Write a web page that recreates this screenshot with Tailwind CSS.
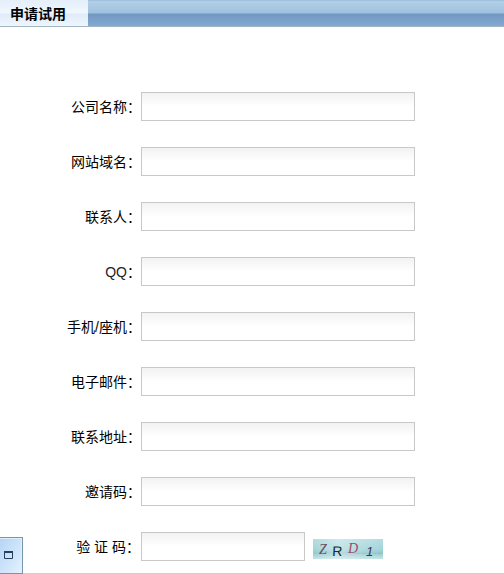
<!DOCTYPE html>
<html lang="zh-CN">
<head>
    <meta charset="UTF-8">
    <meta name="viewport" content="width=device-width, initial-scale=1.0">
    <title>申请试用</title>
    <script src="https://cdn.jsdelivr.net/npm/@tailwindcss/browser@4"></script>
</head>
<body class="relative h-[574px] overflow-hidden bg-white font-['Liberation_Sans','Noto_Sans_CJK_SC',sans-serif] text-sm text-black">

    <!-- title bar -->
    <div class="flex h-[27px] border-b border-[#a3b5c1] bg-[linear-gradient(#8fb4d4_0px,#b3cfe8_1px,#9fc1df_13px,#7298c1_14px,#82a9d2_26px)]">
        <h2 class="flex w-[88px] items-center bg-[linear-gradient(#e4effa_0px,#f0f7fe_13px,#dfebf8_14px,#edf6fd_26px)] pl-[10px] pt-px text-sm font-bold">申请试用</h2>
    </div>

    <form id="form" class="flex flex-col gap-[26px] pt-[65px]">
        <div class="flex h-[29px] items-center">
            <label for="company" class="w-[141px] text-right">公司名称：</label>
            <input type="text" id="company" name="company" autocomplete="off" class="h-[29px] w-[274px] border border-[#c8c8c8] bg-linear-to-b from-[#f2f2f2] to-white to-50% px-2 outline-none">
        </div>
        <div class="flex h-[29px] items-center">
            <label for="domain" class="w-[141px] text-right">网站域名：</label>
            <input type="text" id="domain" name="domain" autocomplete="off" class="h-[29px] w-[274px] border border-[#c8c8c8] bg-linear-to-b from-[#f2f2f2] to-white to-50% px-2 outline-none">
        </div>
        <div class="flex h-[29px] items-center">
            <label for="contact" class="w-[141px] text-right">联系人：</label>
            <input type="text" id="contact" name="contact" autocomplete="off" class="h-[29px] w-[274px] border border-[#c8c8c8] bg-linear-to-b from-[#f2f2f2] to-white to-50% px-2 outline-none">
        </div>
        <div class="flex h-[29px] items-center">
            <label for="qq" class="w-[141px] text-right"><span class="text-[#222]">QQ</span>：</label>
            <input type="text" id="qq" name="qq" autocomplete="off" class="h-[29px] w-[274px] border border-[#c8c8c8] bg-linear-to-b from-[#f2f2f2] to-white to-50% px-2 outline-none">
        </div>
        <div class="flex h-[29px] items-center">
            <label for="phone" class="w-[141px] text-right">手机/座机：</label>
            <input type="text" id="phone" name="phone" autocomplete="off" class="h-[29px] w-[274px] border border-[#c8c8c8] bg-linear-to-b from-[#f2f2f2] to-white to-50% px-2 outline-none">
        </div>
        <div class="flex h-[29px] items-center">
            <label for="email" class="w-[141px] text-right">电子邮件：</label>
            <input type="text" id="email" name="email" autocomplete="off" class="h-[29px] w-[274px] border border-[#c8c8c8] bg-linear-to-b from-[#f2f2f2] to-white to-50% px-2 outline-none">
        </div>
        <div class="flex h-[29px] items-center">
            <label for="address" class="w-[141px] text-right">联系地址：</label>
            <input type="text" id="address" name="address" autocomplete="off" class="h-[29px] w-[274px] border border-[#c8c8c8] bg-linear-to-b from-[#f2f2f2] to-white to-50% px-2 outline-none">
        </div>
        <div class="flex h-[29px] items-center">
            <label for="invite" class="w-[141px] text-right">邀请码：</label>
            <input type="text" id="invite" name="invite" autocomplete="off" class="h-[29px] w-[274px] border border-[#c8c8c8] bg-linear-to-b from-[#f2f2f2] to-white to-50% px-2 outline-none">
        </div>
        <div class="flex h-[29px] items-center">
            <label for="code" class="w-[141px] pr-px text-right">验 证 码：</label>
            <input type="text" id="code" name="code" autocomplete="off" class="h-[29px] w-[164px] border border-[#c8c8c8] bg-linear-to-b from-[#f2f2f2] to-white to-50% px-2 outline-none">
            <!-- captcha -->
            <svg class="ml-2 mt-[5px] h-5 w-[70px] font-['Liberation_Sans',sans-serif]" viewBox="0 0 70 20">
                <defs>
                    <linearGradient id="sky" x1="0" y1="0" x2="0" y2="1">
                        <stop offset="0" stop-color="#b4dde1" />
                        <stop offset="0.5" stop-color="#a3d6da" />
                        <stop offset="0.7" stop-color="#94c8cd" />
                        <stop offset="1" stop-color="#c3e6e5" />
                    </linearGradient>
                    <linearGradient id="glow">
                        <stop offset="0" stop-color="#fff" stop-opacity="0" />
                        <stop offset="0.35" stop-color="#fff" stop-opacity="0.35" />
                        <stop offset="1" stop-color="#fff" stop-opacity="0" />
                    </linearGradient>
                </defs>
                <rect width="70" height="20" fill="url(#sky)" />
                <path d="M42 14.5h28" stroke="#8cbfc4" stroke-dasharray="5 2 3 1" />
                <rect width="70" height="20" fill="url(#glow)" />
                <text x="6" y="14.5" font-size="14" font-style="italic" font-family="Liberation Serif" fill="#6e4a60">Z</text>
                <text x="20" y="17" font-size="14" transform="skewX(-3)" fill="#142c34">R</text>
                <text x="35" y="13.5" font-size="14" font-style="italic" font-family="Liberation Serif" fill="#a04c68">D</text>
                <text x="53" y="17" font-size="13" font-style="italic" fill="#34386c">1</text>
            </svg>
        </div>
    </form>

    <!-- bottom edge and restore button -->
    <div class="absolute bottom-0 left-0 h-px w-full bg-[#d0d0d0]"></div>
    <button type="button" class="absolute bottom-0 left-0 flex h-[37px] w-[23px] items-center border-y border-r border-[#7896ab] bg-linear-to-br from-[#b5d4f7] to-[#e4f2fe] pb-0.5 pl-1 shadow-[inset_-1px_1px_0_#e2effb]">
        <svg class="h-2 w-[9px]" viewBox="0 0 9 8" fill="none">
            <path d="M.5 1v6.5h8V1" stroke="#27405f" />
            <path d="M0 1h9" stroke="#27405f" stroke-width="2" />
        </svg>
    </button>

</body>
</html>
